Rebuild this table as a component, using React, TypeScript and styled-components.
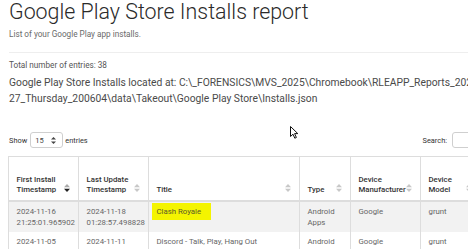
import styled, { createGlobalStyle } from "styled-components";

const GlobalStyle = createGlobalStyle`
  html, body {
    margin: 0;
    padding: 0;
    background: #fff;
    overflow: hidden;
  }
  body {
    font-family: Roboto, "Liberation Sans", Arial, sans-serif;
    color: #333;
  }
`;

const Page = styled.div(() => ({
  width: "564px",
  padding: "0 0 0 8px",
  position: "relative",
}));

const Heading = styled.div(() => ({
  paddingLeft: "1px",
}));

const Title = styled.h1(() => ({
  margin: 0,
  fontSize: "21.4px",
  lineHeight: "24px",
  fontWeight: 300,
  color: "#2a2a2a",
}));

const Subtitle = styled.p(() => ({
  margin: "5px 0 0 0",
  fontSize: "8.2px",
  lineHeight: "10px",
  color: "#6a6a6a",
}));

const Rule = styled.hr(() => ({
  margin: "13px 0 0 1px",
  border: 0,
  borderTop: "1px solid #eeeeee",
}));

const Total = styled.p(() => ({
  margin: "7px 0 0 1px",
  fontSize: "8.2px",
  lineHeight: "10px",
  color: "#555",
}));

const Location = styled.p(() => ({
  margin: "5px 0 0 1px",
  fontSize: "10.3px",
  lineHeight: "16px",
  color: "#4a4a4a",
  whiteSpace: "nowrap",
}));

const Controls = styled.div(() => ({
  marginTop: "25px",
  height: "16px",
  display: "flex",
  alignItems: "center",
  justifyContent: "space-between",
  fontSize: "7.4px",
  color: "#333",
  paddingLeft: "1px",
}));

const Group = styled.label(() => ({
  display: "flex",
  alignItems: "center",
}));

const SelectWrap = styled.span(() => ({
  position: "relative",
  margin: "0 2px 0 3px",
  display: "inline-flex",
}));

const LengthSelect = styled.select(() => ({
  appearance: "none",
  width: "33px",
  height: "16px",
  padding: "0 0 0 4px",
  fontFamily: "inherit",
  fontSize: "7.5px",
  color: "#444",
  background: "#fff",
  border: "1px solid #cfcfcf",
  borderRadius: "3px",
}));

const SelectArrow = styled.svg(() => ({
  position: "absolute",
  right: "7px",
  top: "5px",
  pointerEvents: "none",
}));

const SearchInput = styled.input(() => ({
  width: "120px",
  height: "16px",
  boxSizing: "border-box",
  marginLeft: "5px",
  border: "1px solid #cfcfcf",
  borderRadius: "3px",
}));

const Table = styled.table(() => ({
  marginTop: "8px",
  width: "100%",
  tableLayout: "fixed",
  borderCollapse: "collapse",
  border: "1px solid #dddddd",
  fontSize: "7.8px",
}));

const Th = styled.th(() => ({
  position: "relative",
  padding: "18px 12px 5px 7.5px",
  textAlign: "left",
  verticalAlign: "bottom",
  fontWeight: 500,
  lineHeight: "10px",
  color: "#333",
  border: "1px solid #dddddd",
  borderBottom: "2px solid #dddddd",
}));

const SortIcon = styled.svg(() => ({
  position: "absolute",
  right: "8px",
  bottom: "8px",
}));

const Row = styled.tr<{ $striped?: boolean }>(({ $striped }) => ({
  background: $striped ? "#f2f2f2" : "#fff",
}));

const Td = styled.td(() => ({
  padding: "4px 7.5px",
  verticalAlign: "top",
  lineHeight: "11px",
  color: "#666",
  borderLeft: "1px solid #dddddd",
  borderRight: "1px solid #dddddd",
}));

const Highlight = styled.span(() => ({
  display: "block",
  width: "fit-content",
  margin: "-3px 0 -3px -5px",
  padding: "3px 10px 3px 5px",
  background: "#f4f400",
  color: "#5a5a2a",
}));

const Cursor = styled.svg(() => ({
  position: "absolute",
  left: "290px",
  top: "126px",
}));

type Sort = "none" | "desc";

const SortArrows = ({ sort }: { sort: Sort }) => (
  <SortIcon width="6" height="8" viewBox="0 0 6 8">
    <path d="M3 0 L6 3.2 L0 3.2 Z" fill={sort === "desc" ? "#aaa" : "#c8c8c8"} />
    <path d="M0 4.8 L6 4.8 L3 8 Z" fill={sort === "desc" ? "#222" : "#c8c8c8"} />
  </SortIcon>
);

const columns: { label: string; width: number; sort: Sort }[] = [
  { label: "First Install Timestamp", width: 70, sort: "desc" },
  { label: "Last Update Timestamp", width: 70, sort: "none" },
  { label: "Title", width: 151, sort: "none" },
  { label: "Type", width: 51, sort: "none" },
  { label: "Device Manufacturer", width: 70, sort: "none" },
  { label: "Device Model", width: 60, sort: "none" },
  { label: "Device Type", width: 92, sort: "none" },
];

const rows = [
  {
    first: ["2024-11-16", "21:25:01.965902"],
    last: ["2024-11-18", "01:28:57.498828"],
    title: "Clash Royale",
    highlight: true,
    type: "Android Apps",
    maker: "Google",
    model: "grunt",
    device: "PHONE",
  },
  {
    first: ["2024-11-05", "20:13:21.436123"],
    last: ["2024-11-11", "14:46:31.078716"],
    title: "Discord - Talk, Play, Hang Out",
    highlight: false,
    type: "Android Apps",
    maker: "Google",
    model: "grunt",
    device: "PHONE",
  },
  {
    first: ["2024-11-02", "18:02:44.112905"],
    last: ["2024-11-09", "09:31:12.664201"],
    title: "YouTube",
    highlight: false,
    type: "Android Apps",
    maker: "Google",
    model: "grunt",
    device: "PHONE",
  },
];

export default function App() {
  return (
    <>
      <GlobalStyle />
      <Page>
        <Heading>
          <Title>Google Play Store Installs report</Title>
          <Subtitle>List of your Google Play app installs.</Subtitle>
        </Heading>
        <Rule />
        <Total>Total number of entries: 38</Total>
        <Location>
          Google Play Store Installs located at: C:\_FORENSICS\MVS_2025\Chromebook\RLEAPP_Reports_2025-02-
          <br />
          27_Thursday_200604\data\Takeout\Google Play Store\Installs.json
        </Location>
        <Controls>
          <Group>
            Show
            <SelectWrap>
              <LengthSelect defaultValue="15">
                <option value="10">10</option>
                <option value="15">15</option>
                <option value="25">25</option>
                <option value="50">50</option>
              </LengthSelect>
              <SelectArrow width="5" height="7" viewBox="0 0 5 7">
                <path d="M2.5 0 L5 2.6 L0 2.6 Z" fill="#444" />
                <path d="M0 4.4 L5 4.4 L2.5 7 Z" fill="#444" />
              </SelectArrow>
            </SelectWrap>
            entries
          </Group>
          <Group>
            Search:
            <SearchInput type="search" />
          </Group>
        </Controls>
        <Table>
          <colgroup>
            {columns.map((c) => (
              <col key={c.label} style={{ width: c.width }} />
            ))}
          </colgroup>
          <thead>
            <tr>
              {columns.map((c) => (
                <Th key={c.label}>
                  {c.label}
                  <SortArrows sort={c.sort} />
                </Th>
              ))}
            </tr>
          </thead>
          <tbody>
            {rows.map((r, i) => (
              <Row key={r.title} $striped={i % 2 === 0}>
                <Td>
                  {r.first[0]}
                  <br />
                  {r.first[1]}
                </Td>
                <Td>
                  {r.last[0]}
                  <br />
                  {r.last[1]}
                </Td>
                <Td>{r.highlight ? <Highlight>{r.title}</Highlight> : r.title}</Td>
                <Td>{r.type}</Td>
                <Td>{r.maker}</Td>
                <Td>{r.model}</Td>
                <Td>{r.device}</Td>
              </Row>
            ))}
          </tbody>
        </Table>
        <Cursor width="9" height="13" viewBox="0 0 9 13">
          <path
            d="M0.5 0.5 L0.5 10.5 L3 8.2 L4.8 12.2 L6.4 11.5 L4.6 7.6 L7.8 7.6 Z"
            fill="#fff"
            stroke="#111"
            strokeWidth="1"
          />
        </Cursor>
      </Page>
    </>
  );
}
